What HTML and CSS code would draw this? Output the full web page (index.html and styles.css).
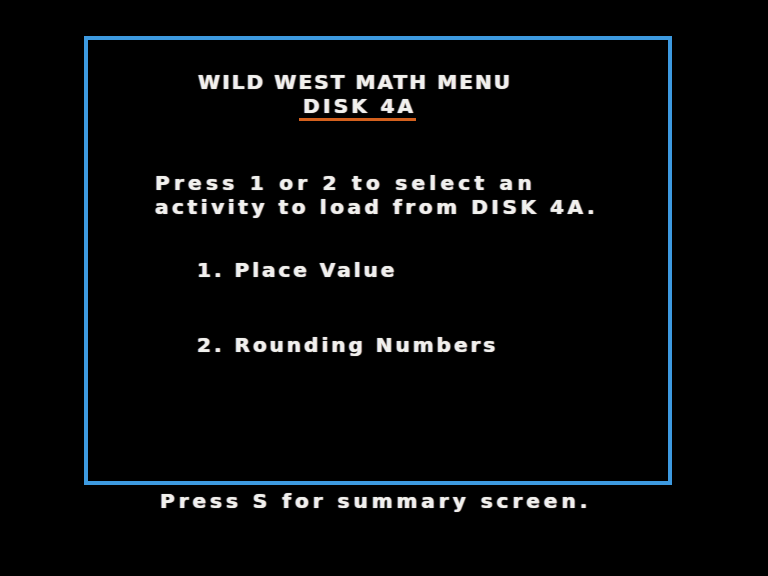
FILE: index.html
```html
<!DOCTYPE html>
<html>
<head>
<meta charset="utf-8">
<link rel="stylesheet" href="styles.css">
</head>
<body>
<div class="screen">
  <div class="frame">
    <div class="line title">WILD WEST MATH MENU</div>
    <div class="line disk"><span class="disk-label">DISK 4A</span></div>
    <div class="line body first">Press 1 or 2 to select an</div>
    <div class="line body second">activity to load from DISK 4A.</div>
    <div class="line item item1">1. Place Value</div>
    <div class="line item item2">2. Rounding Numbers</div>
  </div>
  <div class="line footer">Press S for summary screen.</div>
</div>
</body>
</html>
```

FILE: styles.css
```css
html, body {
  margin: 0;
  padding: 0;
  background: #000;
}

.screen {
  width: 768px;
  height: 576px;
  background: #000;
  overflow: hidden;
  padding-top: 36px;
  box-sizing: border-box;
  font-family: "DejaVu Sans", "Liberation Sans", sans-serif;
  font-weight: bold;
  font-size: 20px;
  color: #f1f1ee;
  letter-spacing: 2px;
  text-shadow: -1px 0 rgba(230, 140, 50, 0.55), 1px 0 rgba(90, 170, 255, 0.55), 0 0 1px rgba(255, 255, 255, 0.5);
}

.frame {
  margin-left: 84px;
  width: 588px;
  height: 449px;
  box-sizing: border-box;
  border: 4px solid #3d9ae0;
  padding-top: 30px;
}

.line {
  line-height: 24px;
  white-space: nowrap;
}

.title {
  padding-left: 110px;
  letter-spacing: 2.1px;
}

.disk {
  padding-left: 215px;
}

.disk-label {
  display: inline-block;
  line-height: 23px;
  margin-left: -4px;
  padding-left: 4px;
  letter-spacing: 3.3px;
  border-bottom: 3px solid #d4611e;
}

.body {
  padding-left: 67px;
}

.body.first {
  margin-top: 50px;
  letter-spacing: 4.3px;
}

.body.second {
  letter-spacing: 3.6px;
}

.item {
  padding-left: 109px;
  letter-spacing: 3px;
}

.item1 {
  margin-top: 39px;
}

.item2 {
  margin-top: 51px;
}

.footer {
  margin-top: 4px;
  padding-left: 160px;
  letter-spacing: 4px;
}
```
